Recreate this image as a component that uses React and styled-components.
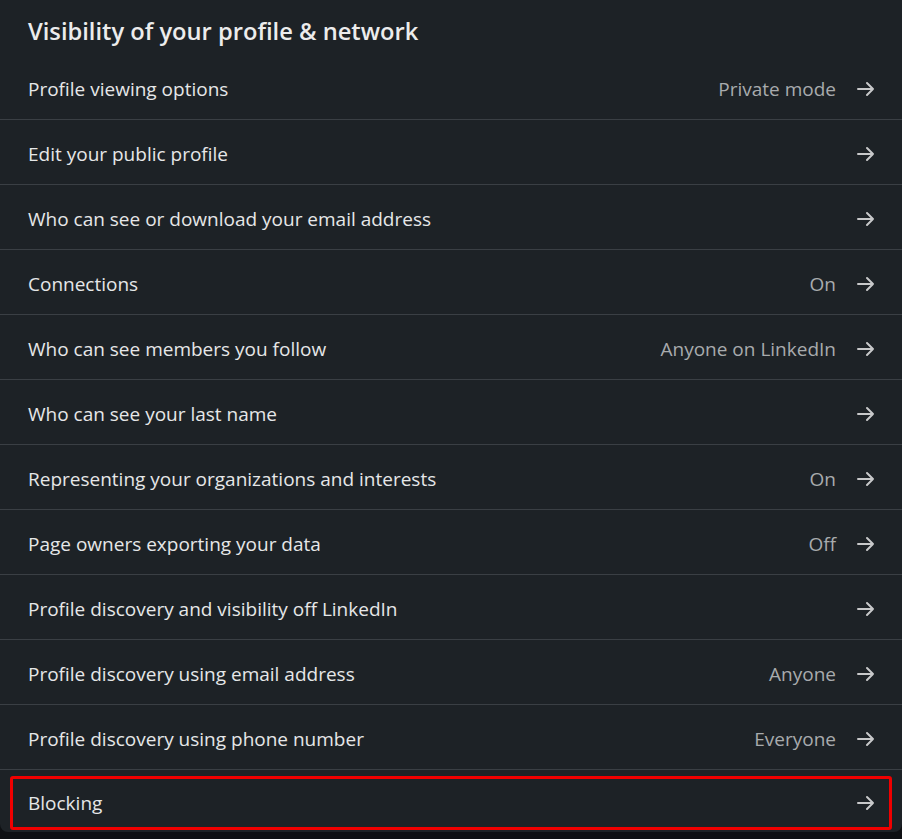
import React from "react";
import styled, { createGlobalStyle } from "styled-components";

const GlobalStyle = createGlobalStyle`
  html, body {
    margin: 0;
    padding: 0;
    background: #0e1013;
  }
  body {
    font-family: "Open Sans", "Noto Sans", sans-serif;
  }
`;

const rows = [
  { label: "Profile viewing options", value: "Private mode" },
  { label: "Edit your public profile" },
  { label: "Who can see or download your email address" },
  { label: "Connections", value: "On" },
  { label: "Who can see members you follow", value: "Anyone on LinkedIn" },
  { label: "Who can see your last name" },
  { label: "Representing your organizations and interests", value: "On" },
  { label: "Page owners exporting your data", value: "Off" },
  { label: "Profile discovery and visibility off LinkedIn" },
  { label: "Profile discovery using email address", value: "Anyone" },
  { label: "Profile discovery using phone number", value: "Everyone" },
  { label: "Blocking", highlight: true },
];

export default function App() {
  return (
    <>
      <GlobalStyle />
      <Card>
        <Title>Visibility of your profile &amp; network</Title>
        <List>
          {rows.map((r) => (
            <Row key={r.label} $highlight={r.highlight}>
              <Label>{r.label}</Label>
              <Right>
                {r.value && <Value>{r.value}</Value>}
                <Arrow />
              </Right>
            </Row>
          ))}
        </List>
      </Card>
    </>
  );
}

function Arrow() {
  return (
    <svg width="24" height="24" viewBox="0 0 24 24" fill="none">
      <path
        d="M4 12h15M13 6l6 6-6 6"
        stroke="#c8c9ca"
        strokeWidth="2"
        strokeLinecap="round"
        strokeLinejoin="round"
      />
    </svg>
  );
}

const Card = styled.div`
  width: 902px;
  height: 832px;
  box-sizing: border-box;
  background: #1d2226;
  border-radius: 0 0 8px 8px;
  overflow: hidden;
  display: flex;
  flex-direction: column;
`;

const Title = styled.h2`
  margin: 0;
  height: 55px;
  box-sizing: border-box;
  padding: 15px 28px 0;
  font-size: 23.7px;
  font-weight: 600;
  color: #ececec;
  line-height: 32px;
`;

const List = styled.div`
  display: flex;
  flex-direction: column;
`;

const Row = styled.div`
  position: relative;
  height: 65px;
  box-sizing: border-box;
  padding: 3px 24px 0 28px;
  display: flex;
  align-items: center;
  justify-content: space-between;
  border-bottom: 1px solid #3a3f44;

  &:last-child {
    border-bottom: none;
    height: 62px;
  }

  ${(p) =>
    p.$highlight &&
    `
    &::after {
      content: "";
      position: absolute;
      left: 10px;
      right: 10px;
      top: 6px;
      bottom: 2px;
      border: 3px solid #f00000;
      border-radius: 3px;
    }
  `}
`;

const Label = styled.span`
  font-size: 19px;
  color: #e6e7e8;
`;

const Right = styled.div`
  display: flex;
  align-items: center;
  gap: 18px;
`;

const Value = styled.span`
  font-size: 19px;
  color: #a8abad;
`;
